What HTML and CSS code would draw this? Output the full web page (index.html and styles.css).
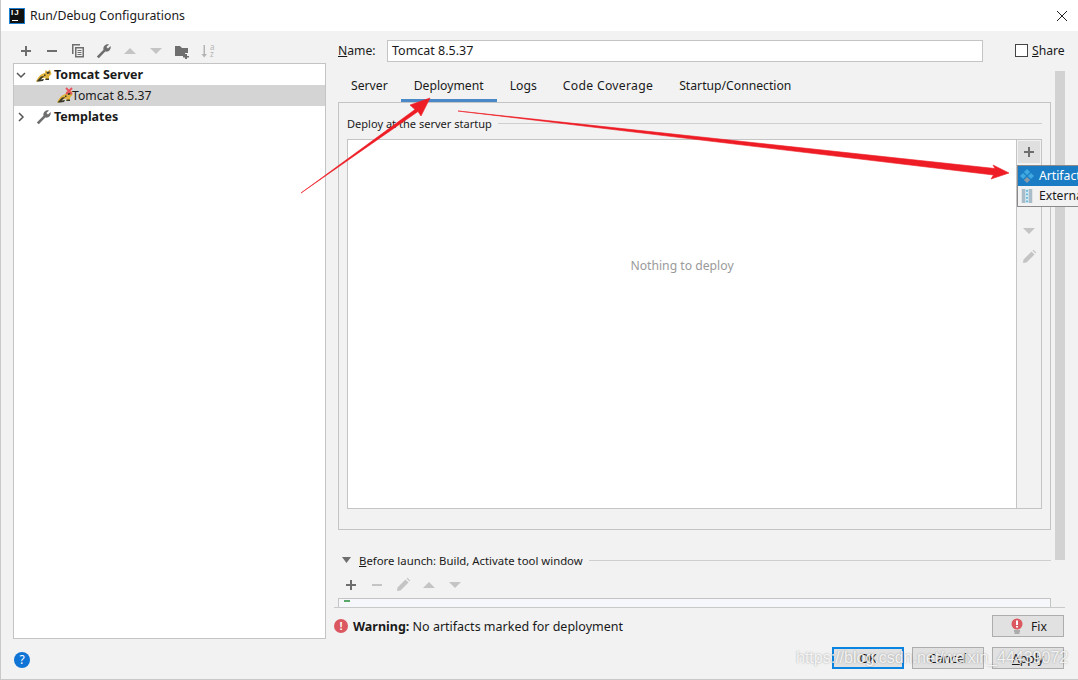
FILE: index.html
```html
<!DOCTYPE html>
<html lang="en">
<head>
<meta charset="utf-8">
<title>Run/Debug Configurations</title>
<link rel="stylesheet" href="styles.css">
</head>
<body>
<svg class="defs" width="0" height="0">
  <defs>
    <symbol id="cat" viewBox="0 0 16 16">
      <path d="M0 14.500 C2 10 5 6.500 9 6 L9.500 3 L11.500 4.500 L14 2.500 L15.500 7 L13 9.500 L13 13 L9.500 13 L9.500 10.500 L5.500 11.500 L3 14.500Z" fill="#e3b43c"/>
      <path d="M.5 14.500 L5 9.500 L8.500 9 L4.500 12.500 L8 12 L7 14 L3 14.500Z M10.500 5 L14 4.500 L13.500 6.500 L11 7Z M9.500 13 L13 13 L13 11.500 L9.500 11.500Z M8 7.500 L9.500 7.500 L9.500 9 L8 9Z" fill="#3a3a2a"/>
    </symbol>
    <symbol id="plus" viewBox="0 0 16 16"><path d="M7 3h2v4h4v2H9v4H7V9H3V7h4z"/></symbol>
    <symbol id="minus" viewBox="0 0 16 16"><path d="M3 7h10v2H3z"/></symbol>
    <symbol id="up" viewBox="0 0 16 16"><path d="M2 11 L8 5 L14 11Z"/></symbol>
    <symbol id="down" viewBox="0 0 16 16"><path d="M2 5 L14 5 L8 11Z"/></symbol>
    <symbol id="pencil" viewBox="0 0 16 16"><path d="M2 14 L2.500 10.500 L10.500 2.500 L13.500 5.500 L5.500 13.500Z M11.500 1.500 L12.500 .8 L15.200 3.500 L14.500 4.500Z"/></symbol>
    <symbol id="wrench" viewBox="0 0 16 16"><path d="M.8 13.500 L7.500 6.800 C6.700 3.400 9.600 .6 13 1.400 L10.400 4 L12 5.600 L14.600 3 C15.400 6.400 12.600 9.300 9.300 8.500 L2.800 15.200 Z"/></symbol>
  </defs>
</svg>
<div class="window">
  <header class="titlebar">
    <svg class="app-logo" viewBox="0 0 16 16" width="16" height="16"><rect width="16" height="16" fill="#1f7fd0"/><rect x="1" y="1" width="14" height="14" fill="#111"/><rect x="3" y="12" width="6" height="1" fill="#fff"/></svg>
    <span class="app-logo-text">IJ</span>
    <span class="title">Run/Debug Configurations</span>
    <svg class="close" viewBox="0 0 12 12" width="12" height="12"><path d="M1 1 L11 11 M11 1 L1 11" stroke="#222" stroke-width="1" fill="none"/></svg>
  </header>
  <main class="content">
    <aside class="left">
      <div class="left-toolbar">
        <svg class="ic dark"><use href="#plus"/></svg>
        <svg class="ic dark"><use href="#minus"/></svg>
        <svg class="ic dark" viewBox="0 0 16 16"><path d="M2 1h8v1.500H3.500V11H2z M5 4h9v10.500H5z M6.500 5.500v7.500h6V5.500z M7.500 7h4v1h-4z M7.500 9h4v1h-4z M7.500 11h4v1h-4z"/></svg>
        <svg class="ic dark"><use href="#wrench"/></svg>
        <svg class="ic light"><use href="#up"/></svg>
        <svg class="ic light"><use href="#down"/></svg>
        <svg class="ic dark" viewBox="0 0 16 16"><path d="M1 3h5l2 2h6v5h-3v3H1z M11 11h2v2h2v1.500h-2v1.500h-2v-1.500H9V13h2z"/></svg>
        <svg class="ic sort" viewBox="0 0 16 16"><path d="M3.500 2h1.500v9h2L4.200 14.500 1.500 11h2z" fill="#b4b4b4"/></svg>
        <span class="sort-text">a<br>z</span>
      </div>
      <div class="tree">
        <div class="tree-row">
          <svg class="chev" viewBox="0 0 10 10" width="10" height="10"><path d="M1 3 L5 7 L9 3" fill="none" stroke="#555" stroke-width="1.500"/></svg>
          <svg class="cat"><use href="#cat"/></svg>
          <b>Tomcat Server</b>
        </div>
        <div class="tree-row selected">
          <span class="cat-wrap"><svg class="cat"><use href="#cat"/></svg><svg class="err" viewBox="0 0 8 8" width="8" height="8"><path d="M1 1 L7 7 M7 1 L1 7" stroke="#e8505b" stroke-width="1.800"/></svg></span>
          <span>Tomcat 8.5.37</span>
        </div>
        <div class="tree-row">
          <svg class="chev" viewBox="0 0 10 10" width="10" height="10"><path d="M3 1 L7 5 L3 9" fill="none" stroke="#555" stroke-width="1.500"/></svg>
          <svg class="cat dark"><use href="#wrench"/></svg>
          <b>Templates</b>
        </div>
      </div>
      <div class="help-row"><span class="help">?</span></div>
    </aside>
    <section class="right">
      <div class="name-row">
        <label class="name-label"><u>N</u>ame:</label>
        <div class="name-input">Tomcat 8.5.37</div>
        <span class="check"></span>
        <span class="share"><u>S</u>hare</span>
      </div>
      <div class="scroll-area">
        <div class="config">
          <nav class="tabs">
            <span class="tab">Server</span>
            <span class="tab active">Deployment</span>
            <span class="tab">Logs</span>
            <span class="tab wide">Code Coverage</span>
            <span class="tab">Startup/Connection</span>
          </nav>
          <div class="panel">
            <div class="legend"><span>Deploy at the server startup</span><i></i></div>
            <div class="list">
              <div class="empty">Nothing to deploy</div>
              <div class="side-tools">
                <span class="side-plus"><svg class="ic dark"><use href="#plus"/></svg></span>
                <svg class="ic light side-gap"><use href="#down"/></svg>
                <svg class="ic light"><use href="#pencil"/></svg>
              </div>
            </div>
          </div>
          <div class="before">
            <svg class="before-arrow" viewBox="0 0 9 6" width="9" height="6"><path d="M0 0 H9 L4.500 6Z" fill="#6e6e6e"/></svg>
            <span><u>B</u>efore launch: Build, Activate tool window</span><i></i>
          </div>
          <div class="before-tools">
            <svg class="ic dark"><use href="#plus"/></svg>
            <svg class="ic light"><use href="#minus"/></svg>
            <svg class="ic light"><use href="#pencil"/></svg>
            <svg class="ic light"><use href="#up"/></svg>
            <svg class="ic light"><use href="#down"/></svg>
          </div>
          <div class="before-list"><em></em></div>
        </div>
        <div class="scrollbar"></div>
      </div>
      <div class="warning-row">
        <span class="warn-dot">!</span>
        <span class="warn-text"><b>Warning:</b> No artifacts marked for deployment</span>
        <button class="btn fix">
          <svg class="fix-icon" viewBox="0 0 12 16" width="12" height="16"><circle cx="6" cy="6" r="5.500" fill="#db5860"/><path d="M5 2.500h2v4.500H5zM5 8h2v1.500H5z" fill="#fff"/><path d="M3 12.500h6v1H3zM3.500 14.500h5v1h-5z" fill="#777"/></svg>
          <span>Fix</span>
        </button>
      </div>
      <div class="actions">
        <button class="btn ok">OK</button>
        <button class="btn">Cancel</button>
        <button class="btn"><u>A</u>pply</button>
      </div>
    </section>
  </main>

  <div class="popup">
    <div class="popup-item on">
      <svg viewBox="0 0 16 16" width="14" height="14"><path d="M8 0 L11.500 3.500 L8 7 L4.500 3.500Z M3.500 4.500 L7 8 L3.500 11.500 L0 8Z M12.500 4.500 L16 8 L12.500 11.500 L9 8Z" fill="#3fa9e0"/><path d="M8 9 L11.500 12.500 L8 16 L4.500 12.500Z" fill="#8c9aa5"/></svg>
      <span>Artifact...</span>
    </div>
    <div class="popup-item">
      <svg viewBox="0 0 16 16" width="14" height="14"><rect x="2" y="0" width="12" height="16" fill="#a9bcc8"/><path d="M6 0h4v16H6z" fill="#d6edf5"/><path d="M7 1h2v2H7zM7 5h2v2H7zM7 9h2v2H7zM7 13h2v2H7z" fill="#5fb4d8"/></svg>
      <span>External Source...</span>
    </div>
  </div>

  <svg class="arrows" viewBox="0 0 1078 680" width="1078" height="680">
    <path d="M301 193 L415 109.500 L410 105 L430 98 L421 116 L418 111.500 Z" fill="#ee1c25" stroke="#ee1c25" stroke-width=".6"/>
    <path d="M458 111 L995 168.500 L993 165 L1009 173 L991 179 L993.500 175 Z" fill="#ee1c25" stroke="#ee1c25" stroke-width=".6"/>
  </svg>
  <div class="watermark">https://blog.csdn.net/weixin_44439072</div>
</div>
</body>
</html>
```
FILE: styles.css
```css
* { box-sizing: border-box; }
html, body { margin: 0; padding: 0; }
body {
  width: 1078px;
  height: 680px;
  overflow: hidden;
  font-family: "Noto Sans", "Open Sans", sans-serif;
  font-size: 12.2px;
  color: #1a1a1a;
  background: #f2f2f2;
}
.defs { position: absolute; }
.window {
  position: relative;
  width: 1078px;
  height: 680px;
  overflow: hidden;
  border-left: 1px solid #c9c9c9;
  border-bottom: 1px solid #c9c9c9;
  display: flex;
  flex-direction: column;
}
.titlebar {
  position: relative;
  height: 31px;
  flex: none;
  background: #fff;
  display: flex;
  align-items: center;
  padding-left: 8px;
}
.app-logo { flex: none; }
.app-logo-text {
  position: absolute;
  left: 10px;
  top: 9px;
  color: #fff;
  font: bold 8px/8px "Liberation Sans", sans-serif;
  letter-spacing: 1px;
}
.title { margin-left: 5px; font-size: 12.3px; }
.close { margin-left: auto; margin-right: 10px; }

.content { flex: 1; display: flex; min-height: 0; }

.left {
  width: 333px;
  flex: none;
  padding: 9px 0 0 12px;
  display: flex;
  flex-direction: column;
}
.left-toolbar {
  position: relative;
  height: 23px;
  display: flex;
  align-items: flex-start;
  padding: 3px 0 0 5px;
  gap: 10px;
}
.ic { width: 16px; height: 16px; flex: none; display: block; }
.ic.dark, .cat.dark { fill: #6e6e6e; }
.ic.light { fill: #c4c4c4; }
.sort-text {
  position: absolute;
  left: 197px;
  top: 3px;
  font-size: 8px;
  line-height: 7px;
  color: #b4b4b4;
}
.tree {
  width: 313px;
  height: 576px;
  flex: none;
  background: #fff;
  border: 1px solid #c4c4c4;
}
.tree-row {
  height: 21px;
  display: flex;
  align-items: center;
  padding-left: 2px;
}
.tree-row b { font-size: 12.5px; font-weight: 700; margin-left: 2px; }
.tree-row.selected { background: #d4d4d4; padding-left: 43px; }
.chev { margin-left: 0; margin-right: 10px; flex: none; }
.cat { width: 16px; height: 16px; flex: none; display: block; }
.cat-wrap { position: relative; width: 15px; height: 16px; flex: none; }
.err { position: absolute; left: 8px; top: -1px; }
.help-row { padding: 13px 0 0 1px; }
.help {
  display: block;
  width: 16px;
  height: 16px;
  border-radius: 50%;
  background: #0f74d6;
  color: #fff;
  font-size: 12px;
  line-height: 16px;
  text-align: center;
}

.right { flex: 1; min-width: 0; display: flex; flex-direction: column; }
.name-row {
  height: 39px;
  flex: none;
  display: flex;
  align-items: flex-start;
  padding: 9px 0 0 4px;
}
.name-label { line-height: 22px; width: 49px; flex: none; }
.name-input {
  width: 596px;
  height: 22px;
  flex: none;
  background: #fff;
  border: 1px solid #c4c4c4;
  padding-left: 4px;
  font-size: 12.5px;
  line-height: 19px;
}
.check {
  width: 13px;
  height: 13px;
  flex: none;
  margin: 4px 0 0 32px;
  background: #fff;
  border: 1px solid #444;
}
.share { margin-left: 4px; line-height: 21px; }

.scroll-area {
  height: 538px;
  flex: none;
  display: flex;
  overflow: hidden;
  border-bottom: 1px solid #c9c9c9;
  margin-right: 13px;
}
.config { width: 721px; flex: none; padding: 0 4px; }
.tabs { height: 32px; display: flex; }
.tab {
  display: flex;
  align-items: center;
  justify-content: center;
  height: 32px;
  padding: 0 13px 2px;
  white-space: nowrap;
}
.tab.active { border-bottom: 3px solid #4a88c7; padding: 1px 13px 0; }
.tab.wide { letter-spacing: .3px; }
.panel {
  height: 428px;
  border: 1px solid #c4c4c4;
  padding: 12px 8px 0 8px;
}
.legend { display: flex; align-items: center; height: 16px; }
.legend span { font-size: 11.05px; flex: none; }
.legend i, .before i { flex: 1; height: 1px; background: #cfcfcf; margin-left: 6px; }
.list {
  margin-top: 8px;
  height: 370px;
  background: #fff;
  border: 1px solid #c4c4c4;
  display: flex;
}
.empty {
  flex: 1;
  text-align: center;
  color: #9a9a9a;
  padding-top: 117px;
  min-height: 0;
}
.side-tools {
  width: 25px;
  flex: none;
  background: #f2f2f2;
  border-left: 1px solid #c4c4c4;
  display: flex;
  flex-direction: column;
  align-items: center;
  padding-top: 1px;
  gap: 10px;
}
.side-plus {
  width: 22px;
  height: 22px;
  background: #dfdfdf;
  display: flex;
  align-items: center;
  justify-content: center;
}
.side-gap { margin-top: 50px; }
.before { display: flex; align-items: center; height: 16px; margin-top: 22px; margin-left: 4px; }
.before-arrow { margin-right: 8px; flex: none; }
.before span { flex: none; font-size: 11.35px; }
.before-tools { display: flex; gap: 10px; height: 26px; margin-top: 9px; align-items: flex-start; padding-left: 5px; }
.before-list {
  height: 12px;
  margin-top: -5px;
  background: #f5f7fa;
  border: 1px solid #c4c4c4;
  border-bottom: 0;
  position: relative;
}
.before-list em { position: absolute; left: 5px; top: 1px; width: 6px; height: 2px; background: #59a869; }
.scrollbar { width: 10px; height: 489px; margin-top: 1px; flex: none; background: #d2d2d2; }

.warning-row {
  height: 39px;
  flex: none;
  display: flex;
  align-items: center;
  padding: 0 14px 3px 0;
}
.warn-dot {
  width: 14px;
  height: 14px;
  border-radius: 50%;
  background: #db5860;
  color: #fff;
  font: bold 11px/14px "Liberation Sans", sans-serif;
  text-align: center;
  flex: none;
}
.warn-text { margin-left: 5px; font-size: 12.5px; }
.warn-text b { font-weight: 700; }
.btn {
  width: 72px;
  height: 22px;
  padding: 0;
  background: #e1e1e1;
  border: 1px solid #adadad;
  font: inherit;
  color: #1a1a1a;
  display: flex;
  align-items: center;
  justify-content: center;
}
.fix { margin-left: auto; gap: 8px; padding-left: 2px; }
.fix-icon { flex: none; }
.actions {
  flex: none;
  display: flex;
  justify-content: flex-end;
  gap: 8px;
  padding: 0 14px 0 0;
}
.ok { border: 2px solid #0a84e0; }

.popup {
  position: absolute;
  left: 1016px;
  top: 165px;
  width: 70px;
  height: 42px;
  background: #f2f2f2;
  border: 1px solid #8a8a8a;
}
.popup-item {
  height: 20px;
  display: flex;
  align-items: center;
  padding: 0 0 1px 2px;
  gap: 5px;
  white-space: nowrap;
}
.popup-item.on { background: #1a7cc4; color: #fff; }
.popup-item svg { flex: none; }

.arrows { position: absolute; left: -1px; top: 0; pointer-events: none; }
.watermark {
  position: absolute;
  left: 795px;
  top: 649px;
  font: 16px/18px "Liberation Sans", sans-serif;
  color: rgba(255,255,255,.85);
  text-shadow: 0 0 2px rgba(0,0,0,.35);
  white-space: nowrap;
}
```
